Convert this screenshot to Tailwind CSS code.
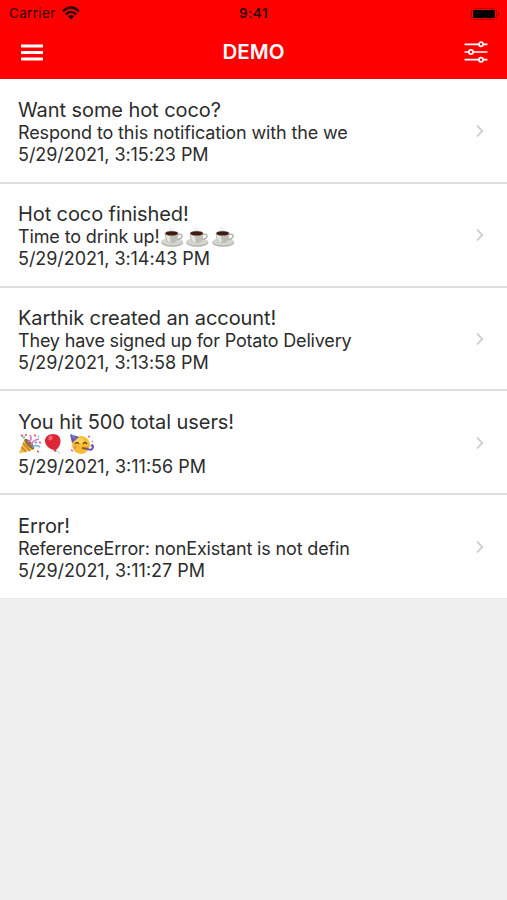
<!DOCTYPE html>
<html lang="en">
<head>
<meta charset="utf-8">
<meta name="viewport" content="width=device-width">
<title>DEMO</title>
<script src="https://cdn.jsdelivr.net/npm/@tailwindcss/browser@4"></script>
</head>
<body class="h-[900px] overflow-hidden bg-[#f0f0f0] font-['Inter','Liberation_Sans',sans-serif] text-[#2c2c2c]">
<svg class="hidden">
  <symbol id="chevron" viewBox="0 0 10 14"><path d="M2 1.5 7.2 7 2 12.5" fill="none" stroke="#c9c9c9" stroke-width="1.7"/></symbol>
  <symbol id="coffee" viewBox="0 0 24 22">
    <ellipse cx="11.5" cy="16.5" rx="11" ry="4.3" fill="#aaa9a2"/>
    <ellipse cx="11.5" cy="15.7" rx="10.7" ry="3.8" fill="#d5d4ce"/>
    <path d="M17 8.5q4.500-1 4.300 1.700-.4 3-5 3.300" fill="none" stroke="#b3b2aa" stroke-width="1.500"/>
    <path d="M4 7.500C4 13 6 17.300 10.800 17.300S17.800 13 17.800 7.500z" fill="#bfbeb6"/>
    <path d="M5 9c.5 5 2.200 7.500 5 7.700L9 9z" fill="#e6e5e0"/>
    <ellipse cx="10.900" cy="7.300" rx="7" ry="2.700" fill="#c8c5bf"/>
    <ellipse cx="10.900" cy="7.400" rx="6.300" ry="2.200" fill="#3d1c13"/>
    <path d="M9.500 4q-1.500-1 0-2t0-1.500M12.300 4q-1-1 .2-2" fill="none" stroke="#dedede" stroke-width=".9"/>
  </symbol>
</svg>

<header class="h-[79px] bg-[#ff0000]">
  <div class="grid h-[28px] grid-cols-3 items-center pl-[9px] pr-[7px] text-[#300000]">
    <div class="flex items-center gap-[6px]">
      <span class="text-[13.5px] leading-none tracking-[0.330px]">Carrier</span>
      <svg class="-mt-[2px] h-[14px] w-[18px]" viewBox="0 0 18 14" fill="none" stroke="#200000" stroke-width="2.300">
        <path d="M1 5.400Q9-2.300 17 5.400M3.900 8.300Q9 3.500 14.100 8.300"/><path d="M9 13.400 5.900 10.200Q9 7.600 12.100 10.200Z" fill="#200000" stroke="none"/>
      </svg>
    </div>
    <span class="-ml-[2px] text-center text-[13.500px] font-semibold leading-none tracking-[0.500px]">9:41</span>
    <svg class="-mt-[1px] h-[14px] w-[30px] justify-self-end" viewBox="0 0 30 14">
      <rect x="1.500" y="1.500" width="25" height="11" rx="3" fill="none" stroke="#b80000"/>
      <rect x="3" y="3" width="22" height="8" rx="1.500" fill="#000"/>
      <path d="M28 5v4q1.500-.6 1.500-2T28 5z" fill="#a80000"/>
    </svg>
  </div>
  <div class="grid h-[48px] grid-cols-3 items-center pl-[21px] pr-[19px]">
    <svg class="h-[17px] w-[22px]" viewBox="0 0 22 17" fill="#fff"><rect y=".5" width="22" height="3" rx=".5"/><rect y="7" width="22" height="3" rx=".5"/><rect y="13.500" width="22" height="3" rx=".5"/></svg>
    <h1 class="-ml-[2px] pt-[1px] text-center text-[20.500px] font-semibold leading-none text-white">DEMO</h1>
    <svg class="h-[22px] w-[24px] justify-self-end" viewBox="0 0 24 22" stroke="#fff" stroke-width="1.700" fill="#ff0000">
      <path d="M.5 3.300h23M.5 11h23M.5 18.700h23"/><circle cx="17" cy="3.300" r="2.100"/><circle cx="7" cy="11" r="2.100"/><circle cx="17" cy="18.700" r="2.100"/>
    </svg>
  </div>
</header>

<main class="bg-white pt-[1px]">
  <article class="flex h-[103.800px] items-center justify-between border-b-2 border-[#dfdfdf] bg-white pl-[18px] pr-[22px] pt-[3px]">
    <div class="whitespace-nowrap">
      <h2 class="text-[20px] leading-[24px] tracking-[-0.080px]"><span>Want some hot coco?</span></h2>
      <p class="text-[18px] leading-[22px] tracking-[-0.120px]"><span>Respond to this notification with the we</span></p>
      <p class="text-[18px] leading-[22px] tracking-[-0.050px]"><span>5/29/2021, 3:15:23 PM</span></p>
    </div>
    <svg class="-mt-[2px] h-[14px] w-[10px]"><use href="#chevron"/></svg>
  </article>
  <article class="flex h-[103.800px] items-center justify-between border-b-2 border-[#dfdfdf] bg-white pl-[18px] pr-[22px] pt-[3px]">
    <div class="whitespace-nowrap">
      <h2 class="text-[20px] leading-[24px] tracking-[-0.100px]"><span>Hot coco finished!</span></h2>
      <p class="flex h-[22px] items-center text-[18px] leading-[22px] tracking-[-0.130px]"><span>Time to drink up!</span><svg class="h-[22px] w-[25.500px]"><use href="#coffee"/></svg><svg class="h-[22px] w-[25.500px]"><use href="#coffee"/></svg><svg class="h-[22px] w-[25.500px]"><use href="#coffee"/></svg></p>
      <p class="text-[18px] leading-[22px] tracking-[-0.050px]"><span>5/29/2021, 3:14:43 PM</span></p>
    </div>
    <svg class="-mt-[2px] h-[14px] w-[10px]"><use href="#chevron"/></svg>
  </article>
  <article class="flex h-[103.800px] items-center justify-between border-b-2 border-[#dfdfdf] bg-white pl-[18px] pr-[22px] pt-[3px]">
    <div class="whitespace-nowrap">
      <h2 class="text-[20px] leading-[24px] tracking-[-0.090px]"><span>Karthik created an account!</span></h2>
      <p class="text-[18px] leading-[22px] tracking-[-0.180px]"><span>They have signed up for Potato Delivery</span></p>
      <p class="text-[18px] leading-[22px] tracking-[-0.050px]"><span>5/29/2021, 3:13:58 PM</span></p>
    </div>
    <svg class="-mt-[2px] h-[14px] w-[10px]"><use href="#chevron"/></svg>
  </article>
  <article class="flex h-[103.800px] items-center justify-between border-b-2 border-[#dfdfdf] bg-white pl-[18px] pr-[22px] pt-[3px]">
    <div class="whitespace-nowrap">
      <h2 class="text-[20px] leading-[24px] tracking-[-0.080px]"><span>You hit 500 total users!</span></h2>
      <div class="flex h-[22px] items-center">
        <svg class="-mt-[2px] h-[22px] w-[78px]" viewBox="0 0 78 22">
          <path d="M1 20.500 6.500 6Q14 10 16 16.500z" fill="#f2b83b"/>
          <path d="m5 10 7 8M3.500 14l4.500 5" stroke="#cf7f2c" stroke-width="1.700"/>
          <ellipse cx="11.400" cy="11" rx="2.500" ry="6.800" transform="rotate(-42 11.400 11)" fill="#8c6e3d"/>
          <path d="M10 9q5-2 2-7M13 12q2-5 8-6" fill="none" stroke="#d979cc" stroke-width="1.700"/>
          <path d="M14 14q4-3 8 0" fill="none" stroke="#6ca7e8" stroke-width="1.600"/>
          <path d="m3 2 2 1.500M16 2l2 1M21 9l2 1M19 18l2 1M8 1v2" stroke="#ed5a58" stroke-width="1.600"/>
          <path d="m5 5 2-1M20 3l1 1M17 10l2-1" stroke="#57aee9" stroke-width="1.500"/>
          <path d="M38 17q2 1 4 4" fill="none" stroke="#aaa" stroke-width=".8"/>
          <path d="M35 1c5 0 7.500 3 7.500 7 0 5-3 8-5 9l1 2-3-1 .5-1C31 16 27 12 27 8c0-4 3-7 8-7z" fill="#df2636"/>
          <ellipse cx="32.500" cy="5" rx="2" ry="2.600" transform="rotate(25 32.500 5)" fill="#f16b70"/>
          <g transform="translate(-1 0)">
            <circle cx="64" cy="12" r="9" fill="#f7bd32"/><ellipse cx="62" cy="8" rx="5" ry="3" fill="#ffd557"/>
            <path d="M53 1 62 4 55 10z" fill="#704db7"/><path d="m55 2 3 4" stroke="#46afd0" stroke-width="1.200"/>
            <path d="M58 11q2-3 4 0M66 11q2-3 4 0" fill="none" stroke="#68401b" stroke-width="1.300"/>
            <path d="m65 15 6 1" stroke="#935022" stroke-width="2"/><path d="M69 15q6 4 7-1 0-3-2-1" fill="none" stroke="#6754bb" stroke-width="2"/>
            <circle cx="58" cy="14.500" r="1.700" fill="#ee954c"/><path d="m71 4 2-1M54 17l2 1M75 8l1 1" stroke="#cf67ba" stroke-width="1.400"/>
          </g>
        </svg>
      </div>
      <p class="text-[18px] leading-[22px]"><span>5/29/2021, 3:11:56 PM</span></p>
    </div>
    <svg class="-mt-[2px] h-[14px] w-[10px]"><use href="#chevron"/></svg>
  </article>
  <article class="flex h-[103.800px] items-center justify-between border-b border-[#e4e4e4] bg-white pl-[18px] pr-[22px] pt-[2px]">
    <div class="whitespace-nowrap">
      <h2 class="text-[20px] leading-[24px] tracking-[-0.050px]"><span>Error!</span></h2>
      <p class="text-[18px] leading-[22px] tracking-[-0.150px]"><span>ReferenceError: nonExistant is not defin</span></p>
      <p class="text-[18px] leading-[22px]"><span>5/29/2021, 3:11:27 PM</span></p>
    </div>
    <svg class="-mt-[2px] h-[14px] w-[10px]"><use href="#chevron"/></svg>
  </article>
</main>
</body>
</html>
